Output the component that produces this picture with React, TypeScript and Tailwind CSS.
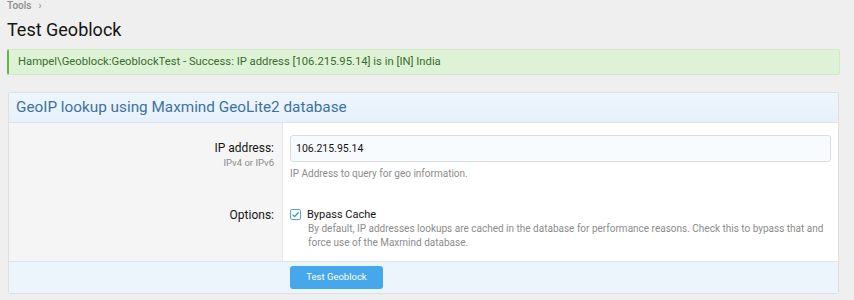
export default function App() {
  return (
    <div className="w-[854px] h-[300px] bg-[#efefef] overflow-hidden pl-[7px] pr-[14px]" style={{ fontFamily: 'Roboto, "Noto Sans", sans-serif' }}>
      <div className="h-[10px] flex items-center gap-[7px] text-[10px] text-[#8c8c8c] font-medium">
        <span>Tools</span>
        <span className="font-normal text-[10px]">›</span>
      </div>
      <h1 className="text-[18px] leading-[26px] text-[#141414] mt-[7px]">Test Geoblock</h1>
      <div className="mt-[6px] h-[26px] flex items-center bg-[#def3d6] border border-[#d0e8c5] border-l-[2px] border-l-[#63b745] rounded-[2px] pl-[9px] text-[11.25px] text-[#3d6b30]">
        Hampel\Geoblock:GeoblockTest - Success: IP address [106.215.95.14] is in [IN] India
      </div>
      <div className="mt-[17px] ml-[1px] w-[831px] border border-[#dfdfdf] rounded-[2px] bg-white">
        <div className="h-[30px] flex items-center pl-[7px] bg-gradient-to-b from-[#edf5fd] to-[#e8f1fa] border-b border-[#dbe5ee] text-[15.3px] text-[#3d72a0]">
          GeoIP lookup using Maxmind GeoLite2 database
        </div>
        <div className="flex">
          <div className="w-[274px] bg-[#f5f5f5] border-r border-[#e6e6e6] text-right pr-[8px] text-[12px] text-[#141414]">
            <div className="pt-[18px] leading-[15px]">IP address:</div>
            <div className="text-[9.5px] text-[#8c8c8c] leading-[12px] mt-[1px]">IPv4 or IPv6</div>
            <div className="mt-[39px] leading-[15px]">Options:</div>
          </div>
          <div className="flex-1 pl-[7px] pr-[7px] pb-[11px]">
            <div className="mt-[12px] h-[27px] border border-[#dcdcdc] rounded-[3px] bg-[#f8fbfe] flex items-center pl-[5px] text-[10.5px] text-[#141414]">
              106.215.95.14
            </div>
            <div className="mt-[6px] text-[10px] text-[#8c8c8c] leading-[12px]">IP Address to query for geo information.</div>
            <div className="mt-[26px] flex items-center gap-[6px] text-[11px] text-[#141414] leading-[15px] pt-[1px]">
              <span className="w-[11px] h-[11px] border border-[#5aa3d6] rounded-[2px] bg-white flex items-center justify-center">
                <svg width="9" height="9" viewBox="0 0 9 9"><path d="M1.5 4.6 L3.6 6.6 L7.6 2.3" stroke="#3b8fd0" strokeWidth="1.3" fill="none" /></svg>
              </span>
              <span>Bypass Cache</span>
            </div>
            <div className="ml-[18px] mt-[0px] text-[10px] text-[#8c8c8c] leading-[14px] w-[522px]">
              By default, IP addresses lookups are cached in the database for performance reasons. Check this to bypass that and force use of the Maxmind database.
            </div>
          </div>
        </div>
        <div className="h-[32px] bg-[#edf5fc] border-t border-[#dbe5ee] flex items-center pl-[281px]">
          <button className="h-[23px] w-[93px] rounded-[3px] bg-[#47a7eb] text-white text-[9.5px]">Test Geoblock</button>
        </div>
      </div>
    </div>
  );
}
